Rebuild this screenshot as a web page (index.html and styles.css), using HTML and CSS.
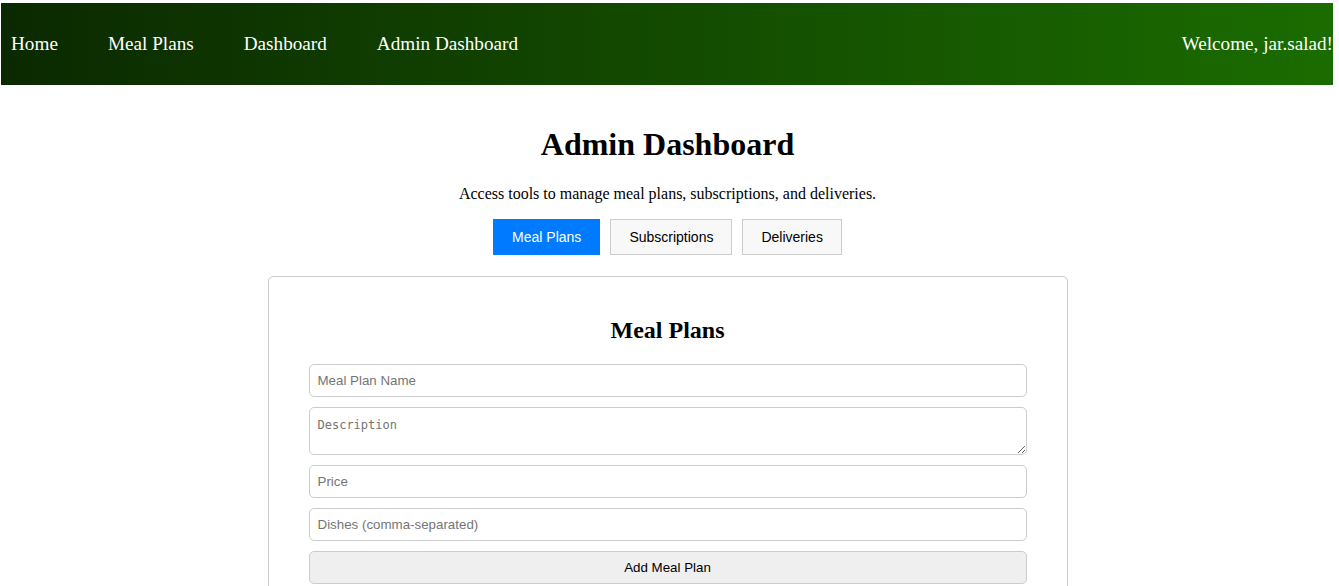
FILE: index.html
```html
<!DOCTYPE html>
<html lang="en">
<head>
<meta charset="utf-8">
<title>Admin Dashboard</title>
<link rel="stylesheet" href="styles.css">
</head>
<body>
<div class="page">
  <nav class="navbar">
    <div class="nav-links">
      <a href="#" class="nav-link">Home</a>
      <a href="#" class="nav-link">Meal Plans</a>
      <a href="#" class="nav-link">Dashboard</a>
      <a href="#" class="nav-link">Admin Dashboard</a>
    </div>
    <span class="welcome">Welcome, jar.salad!</span>
  </nav>
  <main class="content">
    <h1 class="title">Admin Dashboard</h1>
    <p class="subtitle">Access tools to manage meal plans, subscriptions, and deliveries.</p>
    <div class="tabs">
      <button class="tab tab-active">Meal Plans</button>
      <button class="tab">Subscriptions</button>
      <button class="tab">Deliveries</button>
    </div>
    <section class="card">
      <h2 class="card-title">Meal Plans</h2>
      <form class="form">
        <input class="field" type="text" placeholder="Meal Plan Name">
        <textarea class="field field-area" placeholder="Description"></textarea>
        <input class="field" type="text" placeholder="Price">
        <input class="field" type="text" placeholder="Dishes (comma-separated)">
        <button class="submit" type="button">Add Meal Plan</button>
      </form>
    </section>
  </main>
</div>
</body>
</html>
```
FILE: styles.css
```css
html, body {
  margin: 0;
  padding: 0;
  background: #fff;
}
body {
  font-family: "Liberation Serif", "Times New Roman", serif;
  color: #000;
}
.page {
  width: 1335px;
}
.navbar {
  margin: 3px 0 0 1px;
  width: 1332px;
  height: 82px;
  display: flex;
  align-items: center;
  justify-content: space-between;
  background: linear-gradient(to right, #0b2900, #1b6c00);
  overflow: hidden;
  box-sizing: border-box;
  padding-left: 10px;
}
.nav-links {
  display: flex;
  gap: 50px;
}
.nav-link,
.welcome {
  color: #fff;
  text-decoration: none;
  font-size: 19.2px;
  white-space: nowrap;
}
.welcome {
  margin-right: 0;
}
.content {
  padding: 20px 0 0;
  display: flex;
  flex-direction: column;
  align-items: center;
}
.title {
  font-size: 32px;
  font-weight: bold;
  margin: 21.44px 0;
}
.subtitle {
  font-size: 16px;
  margin: 0 0 16px;
}
.tabs {
  display: flex;
  gap: 10px;
  margin-bottom: 21px;
}
.tab {
  font-family: "Liberation Sans", Arial, sans-serif;
  font-size: 14px;
  line-height: 16px;
  padding: 9px 18px;
  border: 1px solid #ccc;
  background: #f8f8f8;
  color: #000;
  border-radius: 0;
  cursor: pointer;
}
.tab-active {
  background: #007bff;
  border-color: #007bff;
  color: #fff;
}
.card {
  width: 800px;
  box-sizing: border-box;
  border: 1px solid #ccc;
  border-radius: 5px;
  padding: 20px 40px;
}
.card-title {
  font-size: 24px;
  font-weight: bold;
  text-align: center;
  margin: 19.92px 0;
}
.form {
  display: flex;
  flex-direction: column;
  gap: 10px;
}
.field {
  display: block;
  width: 100%;
  box-sizing: border-box;
  font-family: "Liberation Sans", Arial, sans-serif;
  font-size: 13.333px;
  line-height: 15px;
  padding: 8px;
  border: 1px solid #ccc;
  border-radius: 5px;
  margin: 0;
  color: #000;
}
.field::placeholder {
  color: #757575;
}
.field-area {
  font-family: "DejaVu Sans Mono", "Liberation Mono", monospace;
  font-size: 12px;
  line-height: 16px;
  padding-top: 9px;
  height: 48px;
  resize: vertical;
}
.submit {
  display: block;
  width: 100%;
  box-sizing: border-box;
  font-family: "Liberation Sans", Arial, sans-serif;
  font-size: 13.333px;
  line-height: 15px;
  padding: 8px;
  border: 1px solid #ccc;
  border-radius: 5px;
  background: #efefef;
  color: #000;
  margin: 0;
}
```
